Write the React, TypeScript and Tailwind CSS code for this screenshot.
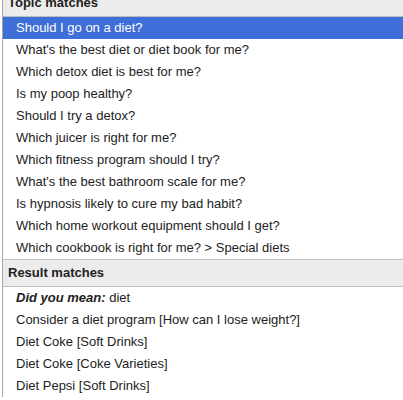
const topics = [
  'Should I go on a diet?',
  "What's the best diet or diet book for me?",
  'Which detox diet is best for me?',
  'Is my poop healthy?',
  'Should I try a detox?',
  'Which juicer is right for me?',
  'Which fitness program should I try?',
  "What's the best bathroom scale for me?",
  'Is hypnosis likely to cure my bad habit?',
  'Which home workout equipment should I get?',
  'Which cookbook is right for me? > Special diets',
]

const results = [
  'Consider a diet program [How can I lose weight?]',
  'Diet Coke [Soft Drinks]',
  'Diet Coke [Coke Varieties]',
  'Diet Pepsi [Soft Drinks]',
]

function SectionHeader({ label, top }: { label: string; top?: boolean }) {
  return (
    <div
      className={`flex h-[28px] items-center border-b border-[#bdbdbd] bg-[#ececec] pl-[5px] text-[13px] font-bold text-[#222] ${
        top ? '' : 'border-t'
      }`}
    >
      {label}
    </div>
  )
}

function Row({ children, selected }: { children: React.ReactNode; selected?: boolean }) {
  return (
    <div
      className={`flex h-[22px] items-center whitespace-nowrap pl-[13px] text-[13px] ${
        selected ? 'bg-[#3e6ed8] text-white' : 'text-[#222]'
      }`}
    >
      {children}
    </div>
  )
}

export default function App() {
  return (
    <div className="h-[400px] w-[403px] overflow-hidden bg-white font-['Liberation_Sans',Arial,sans-serif]">
      <div className="-mt-[11px] ml-[2px] border-l border-[#a8a8a8]">
        <SectionHeader label="Topic matches" top />
        {topics.map((t, i) => (
          <Row key={t} selected={i === 0}>
            {t}
          </Row>
        ))}
        <SectionHeader label="Result matches" />
        <Row>
          <span className="font-bold italic">Did you mean:</span>&nbsp;diet
        </Row>
        {results.map((r) => (
          <Row key={r}>{r}</Row>
        ))}
      </div>
    </div>
  )
}
